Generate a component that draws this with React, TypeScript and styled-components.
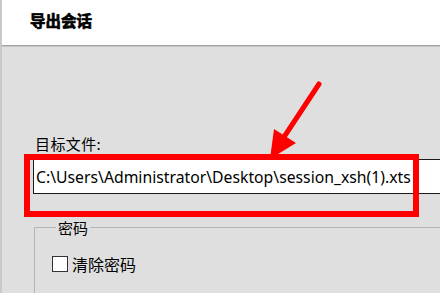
import React from "react";
import styled, {createGlobalStyle} from "styled-components";

const GlobalStyle = createGlobalStyle`
    html, body {
        margin: 0;
        padding: 0;
        background: #dfdfdf;
        overflow: hidden;
    }
`;

const Window = styled.div`
    position: relative;
    width: 440px;
    height: 293px;
    overflow: hidden;
    background: #dfdfdf;
    font-family: "Noto Sans", "Noto Sans CJK SC", sans-serif;
    color: #000;
    display: flex;
    flex-direction: column;
    box-sizing: border-box;
    border-left: 2px solid #c9c9c9;
`;

const Header = styled.div`
    flex: 0 0 46px;
    background: #fff;
    border-left: 1px solid #111;
    margin-left: -2px;
    border-bottom: 1px solid #a2a2a2;
    box-shadow: 0 1px 0 #c6c6c6;
    padding: 9px 0 0 29px;
    box-sizing: border-box;
`;

const Title = styled.h1`
    margin: 0;
    font-size: 15.5px;
    line-height: 22px;
    font-weight: 700;
    -webkit-text-stroke: 0.7px #000;
    font-family: "Noto Sans CJK SC", sans-serif;
`;

const Body = styled.div`
    flex: 1;
    padding: 88px 0 0 31px;
    display: flex;
    flex-direction: column;
`;

const FieldLabel = styled.label`
    font-size: 15px;
    line-height: 20px;
    margin-left: 2px;
    letter-spacing: 0.4px;
    font-family: "Noto Sans CJK SC", sans-serif;
`;

const PathInput = styled.div`
    margin-top: 5px;
    width: 420px;
    height: 35px;
    box-sizing: border-box;
    background: #fff;
    border: 1px solid #1a1a1a;
    padding-left: 2px;
    display: flex;
    align-items: center;
    font-size: 15.75px;
    white-space: nowrap;
`;

const GroupBox = styled.fieldset`
    margin: 23px 0 0 1px;
    width: 440px;
    height: 100px;
    box-sizing: border-box;
    border: 1px solid #b4b4b4;
    padding: 14px 0 0 17px;
`;

const Legend = styled.legend`
    font-size: 15px;
    padding: 0 2px;
    margin-left: 4px;
    font-family: "Noto Sans CJK SC", sans-serif;
`;

const CheckRow = styled.label`
    display: flex;
    align-items: center;
    gap: 4px;
    font-size: 16px;
    font-family: "Noto Sans CJK SC", sans-serif;
`;

const Box = styled.span`
    width: 16px;
    height: 16px;
    box-sizing: border-box;
    background: #fff;
    border: 1px solid #333;
`;

const RedFrame = styled.div`
    position: absolute;
    left: 22px;
    top: 154px;
    width: 395px;
    height: 63px;
    box-sizing: border-box;
    border: 6px solid #ff0000;
`;

const Arrow = styled.svg`
    position: absolute;
    left: 0;
    top: 0;
`;

const App: React.FC = () => {
    return (
        <>
            <GlobalStyle/>
            <Window>
                <Header>
                    <Title>导出会话</Title>
                </Header>
                <Body>
                    <FieldLabel>目标文件:</FieldLabel>
                    <PathInput>C:\Users\Administrator\Desktop\session_xsh(1).xts</PathInput>
                    <GroupBox>
                        <Legend>密码</Legend>
                        <CheckRow>
                            <Box/>
                            清除密码
                        </CheckRow>
                    </GroupBox>
                </Body>
                <RedFrame/>
                <Arrow width="440" height="293" viewBox="0 0 440 293">
                    <line x1="317" y1="84" x2="282" y2="137" stroke="#ff0000" strokeWidth="5" strokeLinecap="round"/>
                    <polygon points="268,159 272,129 294,143" fill="#ff0000"/>
                </Arrow>
            </Window>
        </>
    );
};

export default App;
